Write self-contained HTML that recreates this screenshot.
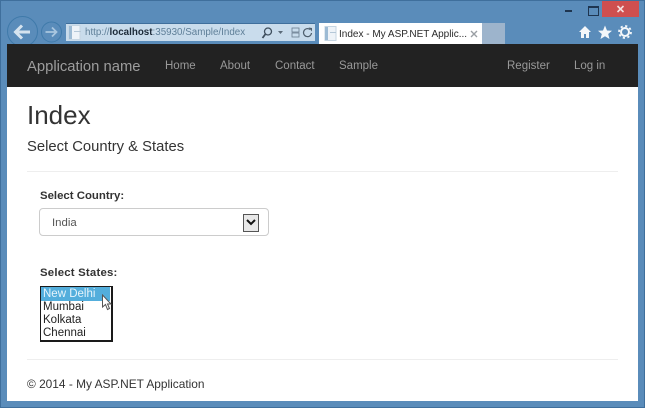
<!DOCTYPE html>
<html><head><meta charset="utf-8"><style>
html,body{margin:0;padding:0}
body{width:645px;height:408px;position:relative;overflow:hidden;background:#5a8cba;font-family:"Liberation Sans",sans-serif}
div,span.a,svg{position:absolute}
.t{white-space:nowrap;line-height:1}
.n{color:#999;font-size:11.500px;top:61px}
</style></head><body>
<div style="left:0;top:0;width:645px;height:1px;background:#3f6f9c"></div>
<div style="left:0;top:0;width:1px;height:408px;background:#3f6f9c"></div>
<div style="left:644px;top:0;width:1px;height:408px;background:#3f6f9c"></div>
<div style="left:0;top:407px;width:645px;height:1px;background:#3f6f9c"></div>

<svg style="left:0;top:0" width="66" height="50" viewBox="0 0 66 50">
<circle cx="22.500" cy="31.500" r="15" fill="#5a8cba" stroke="#3f7aaa" stroke-width="1"/>
<circle cx="51.500" cy="32" r="10" fill="#5a8cba" stroke="#3f7aaa" stroke-width="1"/>
<path d="M30 32H16M22 25.500L15.500 32L22 38.500" fill="none" stroke="#d5e3ef" stroke-width="3"/>
<path d="M45.500 32H56M52 27.500L56.500 32L52 36.500" fill="none" stroke="#a9c6df" stroke-width="1.800"/>
</svg>

<div style="left:66px;top:23px;width:249px;height:18px;background:#c9dcec;border:0"></div>
<div style="left:66px;top:23px;width:249px;height:1px;background:#3f6f9c"></div>
<svg style="left:68px;top:25px" width="14" height="15" viewBox="0 0 14 15">
<rect x="1" y="0.500" width="11" height="14" fill="#eef3f8" stroke="#c5d5e2"/>
<rect x="1" y="1" width="3" height="13" fill="#9dbbd4"/>
<rect x="6" y="6" width="7" height="1" fill="#b5c8d8"/>
</svg>
<div class="t" style="left:85px;top:28px;font-size:9.800px;color:#5f7f98">http://<span style="color:#1c2a38;font-weight:bold">localhost</span>:35930/Sample/Index</div>
<svg style="left:260px;top:26px" width="55" height="14" viewBox="0 0 55 14">
<circle cx="8" cy="5.500" r="3.500" fill="none" stroke="#3f4f5e" stroke-width="1.300"/>
<path d="M5.500 8L2.500 12" stroke="#3f4f5e" stroke-width="1.800"/>
<path d="M18 5h5l-2.500 3z" fill="#5a6a78"/>
<rect x="32" y="2" width="7" height="4" fill="none" stroke="#6a7c8e" stroke-width=".8"/>
<rect x="32" y="7" width="7" height="4" fill="none" stroke="#6a7c8e" stroke-width=".8"/>
<path d="M50 3.500a4 4 0 1 0 1.500 3.500" fill="none" stroke="#4f5f6e" stroke-width="1.200"/>
<path d="M48.500 1.500l3.500 .5v3.500z" fill="#4f5f6e"/>
</svg>

<div style="left:319px;top:23px;width:163px;height:21px;background:#fff"></div>
<svg style="left:324px;top:26px" width="14" height="15" viewBox="0 0 14 15">
<rect x="1" y="0.500" width="11" height="14" fill="#eef3f8" stroke="#c5d5e2"/>
<rect x="1" y="1" width="3" height="13" fill="#9dbbd4"/>
<rect x="6" y="6" width="6" height="1" fill="#b5c8d8"/>
</svg>
<div class="t" style="left:339px;top:30px;font-size:10px;color:#2a2a2a">Index - My ASP.NET Applic...</div>
<svg style="left:470px;top:30px" width="8" height="8" viewBox="0 0 8 8"><path d="M1 1L7 7M7 1L1 7" stroke="#9a9fa4" stroke-width="1.400"/></svg>
<div style="left:482px;top:23px;width:23px;height:21px;background:#9db4cc"></div>

<div style="left:602px;top:1px;width:37px;height:16px;background:#cf4f4f"></div>
<svg style="left:616px;top:5px" width="9" height="8" viewBox="0 0 9 8"><path d="M1.500 1L7.500 7M7.500 1L1.500 7" stroke="#f3dede" stroke-width="1.600"/></svg>
<div style="left:565px;top:10px;width:7px;height:2px;background:#1e3550"></div>
<div style="left:588px;top:6px;width:9px;height:7px;border:1px solid #1e3550;border-top-width:2px"></div>

<svg style="left:578px;top:24px" width="56" height="16" viewBox="0 0 56 16">
<path d="M7 2L1 8H3V14H6V10H8V14H11V8H13Z" fill="#f4f7fa"/>
<path d="M27 1.500L29 6.500L34 6.800L30.200 10L31.500 15L27 12.200L22.500 15L23.800 10L20 6.800L25 6.500Z" fill="#f4f7fa"/>
<circle cx="47" cy="8" r="4" fill="none" stroke="#f4f7fa" stroke-width="2"/>
<circle cx="47" cy="8" r="6" fill="none" stroke="#f4f7fa" stroke-width="1.800" stroke-dasharray="2.200 2.500"/>
</svg>

<div style="left:7px;top:44px;width:631px;height:357px;background:#fff"></div>
<div style="left:7px;top:44px;width:631px;height:43px;background:#222"></div>

<div class="t" style="left:27px;top:59.500px;font-size:14.800px;color:#9d9d9d">Application name</div>
<div class="t n" style="left:165px">Home</div>
<div class="t n" style="left:220px">About</div>
<div class="t n" style="left:275px">Contact</div>
<div class="t n" style="left:339px">Sample</div>
<div class="t n" style="left:507px">Register</div>
<div class="t n" style="left:574px">Log in</div>

<div class="t" style="left:27px;top:102px;font-size:26px;color:#333">Index</div>
<div class="t" style="left:27px;top:140px;font-size:14.800px;color:#333">Select Country &amp; States</div>
<div style="left:27px;top:171px;width:591px;height:1px;background:#eee"></div>

<div class="t" style="left:40px;top:191px;font-size:11.400px;font-weight:bold;color:#333">Select Country:</div>
<div style="left:39px;top:208px;width:228px;height:26px;background:#fff;border:1px solid #ccc;border-radius:4px"></div>
<div class="t" style="left:52px;top:218px;font-size:11.400px;color:#555">India</div>
<div style="left:243px;top:214px;width:14px;height:16px;background:#e8e8e8;border:1px solid #555"></div>
<svg style="left:246px;top:219px" width="10" height="7" viewBox="0 0 10 7"><path d="M1 1L5 5L9 1" fill="none" stroke="#111" stroke-width="2"/></svg>

<div class="t" style="left:40px;top:268px;font-size:11.400px;font-weight:bold;color:#333;letter-spacing:.2px">Select States:</div>
<div style="left:40px;top:286px;width:70px;height:53px;background:#fff;border:1px solid #1a1a1a;border-width:1px 2px 2px 1px"></div>
<div style="left:41px;top:287px;width:69px;height:14px;background:#53aedc"></div>
<div class="t" style="left:43px;top:289px;font-size:11.500px;color:#e6f4fb">New Delhi</div>
<div class="t" style="left:43px;top:302px;font-size:11.500px;color:#222">Mumbai</div>
<div class="t" style="left:43px;top:315px;font-size:11.500px;color:#222">Kolkata</div>
<div class="t" style="left:43px;top:328px;font-size:11.500px;color:#222">Chennai</div>
<svg style="left:101px;top:294px" width="12" height="18" viewBox="0 0 12 18"><path d="M1.500 1V13L4.500 10.500L6.500 15.500L8.500 14.500L6.500 10H10Z" fill="#fff" stroke="#555" stroke-width="1"/></svg>

<div style="left:27px;top:359px;width:591px;height:1px;background:#eee"></div>
<div class="t" style="left:27px;top:379px;font-size:11.900px;color:#333">© 2014 - My ASP.NET Application</div>
</body></html>
